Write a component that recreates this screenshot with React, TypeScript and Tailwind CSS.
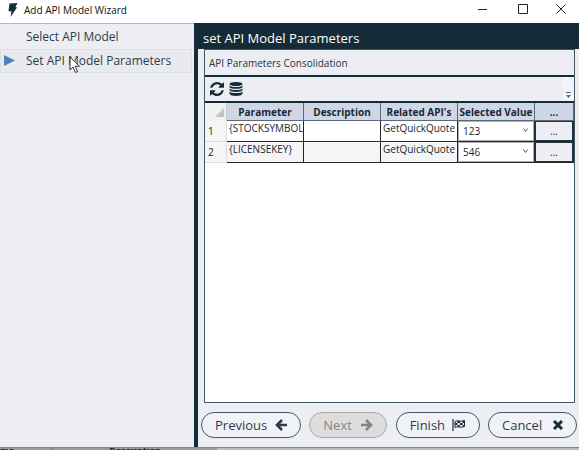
import React, { useState } from "react";

const steps = ["Select API Model", "Set API Model Parameters"];

const rows = [
  { id: 1, name: "{STOCKSYMBOL}", api: "GetQuickQuote", value: "123", shade: "bg-white" },
  { id: 2, name: "{LICENSEKEY}", api: "GetQuickQuote", value: "546", shade: "bg-[#f5f5f5]" },
];

function BoltIcon() {
  return (
    <svg width="10" height="14" viewBox="0 0 10 14" fill="#152b37" aria-hidden="true">
      <path d="M1.500 0.500 9.500 0 7.500 4 9 4.500 2.500 14 3.500 8.500 0.500 8z" />
    </svg>
  );
}

function RefreshIcon() {
  return (
    <svg width="14" height="14" viewBox="0 0 1536 1536" fill="#152b37" aria-hidden="true">
      <path d="M1511 928q0 5-1 7-64 268-268 434.500T764 1536q-146 0-282.500-55T238 1324l-129 129q-19 19-45 19t-45-19-19-45V960q0-26 19-45t45-19h448q26 0 45 19t19 45-19 45l-137 137q71 66 161 102t187 36q134 0 250-65t186-179q11-17 53-117 8-23 30-23h192q13 0 22.500 9.500t9.500 22.500zm25-800v448q0 26-19 45t-45 19h-448q-26 0-45-19t-19-45 19-45l138-138Q969 256 768 256q-134 0-250 65T332 500q-11 17-53 117-8 23-30 23H50q-13 0-22.500-9.500T18 608v-7q65-268 270-434.500T768 0q146 0 284 55.500T1297 212l130-129q19-19 45-19t45 19 19 45z" />
    </svg>
  );
}

function DatabaseIcon() {
  return (
    <svg width="14" height="14" viewBox="0 0 14 14" fill="#152b37" aria-hidden="true">
      <ellipse cx="7" cy="2" rx="6.500" ry="2" />
      <path d="M.5 3.400C2 5.400 12 5.400 13.500 3.400v1.800c-1.500 2.200-11.500 2.200-13 0z" />
      <path d="M.5 6.500c1.500 2 11.500 2 13 0v1.800c-1.500 2.200-11.500 2.200-13 0z" />
      <path d="M.5 9.600c1.500 2 11.500 2 13 0v2.200c-1.500 2.900-11.500 2.900-13 0z" />
    </svg>
  );
}

function ArrowIcon({ flip = false }: { flip?: boolean }) {
  return (
    <svg width="12" height="12" viewBox="0 0 12 12" fill="none" stroke="currentColor" strokeWidth="2.600" className={flip ? "rotate-180" : ""} aria-hidden="true">
      <path d="M7 1 2 6l5 5M2 6h10" />
    </svg>
  );
}

function FlagIcon() {
  return (
    <svg width="14" height="12" viewBox="0 0 14 12" fill="none" stroke="#152b37" aria-hidden="true">
      <path d="M1 0v12" strokeWidth="1.200" />
      <path d="M3 2.500c3-2 5 1 9.500-1v6c-4.500 2-6.500-1-9.500 1z" />
      <path d="M3 4h2.500v2H3zM8 4h2.500v2H8zM5.500 2h2.500v2H5.500zM5.500 6h2.500v1.500H5.500zM10.500 2h2v2h-2zM10.500 6h2v1.500h-2z" fill="#152b37" stroke="none" />
    </svg>
  );
}

function CloseIcon() {
  return (
    <svg width="10" height="10" viewBox="0 0 10 10" stroke="#152b37" strokeWidth="3" aria-hidden="true">
      <path d="M1 1 9 9M9 1 1 9" />
    </svg>
  );
}

function Pointer() {
  return (
    <svg className="pointer-events-none absolute left-[69px] top-[32px]" width="12" height="18" viewBox="0 0 12 18" aria-hidden="true">
      <path d="M1 1v13l3-3 2.500 5.500 2-1L6.200 10.200H10.500z" fill="#fff" stroke="#333" />
    </svg>
  );
}

function TitleBar() {
  return (
    <header className="flex h-[23px] shrink-0 items-start bg-white pl-2">
      <div className="flex h-[19px] flex-1 items-center gap-[6px]">
        <BoltIcon />
        <h1 className="text-[10px] leading-4 text-[#111]">Add API Model Wizard</h1>
      </div>
      <div className="flex h-[18px]">
        <button aria-label="Minimize" className="flex w-10 items-center justify-center">
          <svg width="10" height="10" stroke="#222"><path d="M0 5.500h9" /></svg>
        </button>
        <button aria-label="Maximize" className="flex w-10 items-center justify-center">
          <svg width="10" height="10" stroke="#222" fill="none"><path d="M.5.5h9v9h-9z" /></svg>
        </button>
        <button aria-label="Close" className="flex w-9 items-center justify-center">
          <svg width="10" height="10" stroke="#222"><path d="M.5.5l9 9M9.500.5l-9 9" /></svg>
        </button>
      </div>
    </header>
  );
}

function Sidebar() {
  return (
    <nav className="relative w-[194px] shrink-0 border-t border-[#b4b6ba] bg-[#edeef4] pr-[2px] pt-px">
      <ul>
        {steps.map((step, i) => (
          <li key={step}>
            <button
              aria-current={i === 1 ? "step" : undefined}
              className={
                "flex h-6 w-full items-center border text-left text-[12px] leading-4 text-[#2c3d49] " +
                (i === 1 ? "border-[#dfe0e3] bg-[#e9eaed]" : "border-transparent")
              }
            >
              <span className="w-[25px] pl-[3px]">
                {i === 1 && (
                  <svg width="11" height="12" fill="#4a83b8" aria-hidden="true"><path d="M0 0 11 5.500 0 11z" /></svg>
                )}
              </span>
              {step}
            </button>
          </li>
        ))}
      </ul>
      <Pointer />
    </nav>
  );
}

function ParameterTable() {
  const [values, setValues] = useState(rows.map((r) => r.value));
  const head = "h-[18px] border-r border-b border-[#5c6875] bg-[#cfd7e7] p-0 text-center font-bold";
  return (
    <table className="w-full table-fixed border-separate border-spacing-0 text-[10px] leading-[14px] text-[#1b2730]">
      <colgroup>
        <col className="w-[22px]" />
        <col />
        <col />
        <col />
        <col />
        <col className="w-[39px]" />
      </colgroup>
      <thead>
        <tr>
          <th className="border-r border-[#c4c9d0] bg-[#f1f1f1] p-0" aria-label="Row">
            <svg className="ml-auto mr-[2px]" width="9" height="9" fill="#c4c4c4" aria-hidden="true"><path d="M9 0v9H0z" /></svg>
          </th>
          <th className={head}>Parameter</th>
          <th className={head}>Description</th>
          <th className={head}>Related API's</th>
          <th className={head + " whitespace-nowrap"}>Selected Value</th>
          <th className={head}>...</th>
        </tr>
      </thead>
      <tbody>
        {rows.map((r, i) => {
          const cell = "h-[21px] overflow-hidden whitespace-nowrap border-r border-b border-[#262626] p-0 align-top " + r.shade;
          return (
            <tr key={r.id}>
              <th className="border-r border-b border-[#dddddd] bg-[#f5f5f5] p-0 pl-[3px] text-left align-middle font-normal">{r.id}</th>
              <td className={cell + " pl-[2px]"}>{r.name}</td>
              <td className={cell} />
              <td className={cell + " pl-[2px]"}>{r.api}</td>
              <td className={cell}>
                <div className="relative">
                  <select
                    aria-label={"Selected value for " + r.name}
                    value={values[i]}
                    onChange={(e) => setValues(values.map((v, k) => (k === i ? e.target.value : v)))}
                    className="block h-5 w-full appearance-none border border-[#adb0b5] bg-white pl-1 text-[10px] leading-4 text-[#1b2730]"
                  >
                    <option>123</option>
                    <option>546</option>
                  </select>
                  <svg className="pointer-events-none absolute right-[6px] top-[7px]" width="5" height="5" fill="none" stroke="#555" aria-hidden="true"><path d="M.5.5l2 3 2-3" /></svg>
                </div>
              </td>
              <td className={cell}>
                <button aria-label={"Edit " + r.name} className="flex h-5 w-full items-center justify-center border border-[#26323c] bg-[#edeef4] text-[10px] leading-3">
                  ...
                </button>
              </td>
            </tr>
          );
        })}
      </tbody>
    </table>
  );
}

const pill = "flex h-[26px] items-center justify-between rounded-full border px-[13px] text-[13px] leading-4 ";
const active = "border-[#425866] bg-[#f1f2f7] text-[#2c3d49]";

export default function App() {
  return (
    <div className="flex h-screen flex-col overflow-hidden bg-[#b9bbbc] font-['Open_Sans','Noto_Sans',sans-serif]">
      <TitleBar />
      <div className="flex min-h-0 flex-1">
        <Sidebar />
        <main className="flex min-w-0 flex-1 flex-col border-l-4 border-[#152b37] bg-[#edeef4]">
          <h2 className="flex h-[26px] shrink-0 items-center bg-[#152b37] pl-[5px] pt-1 text-[13px] leading-5 text-white">
            set API Model Parameters
          </h2>
          <section className="ml-[6px] mr-1 flex min-h-0 flex-1 flex-col border border-[#425866] bg-white">
            <h3 className="flex h-[27px] shrink-0 items-center border-b-2 border-[#152b37] bg-[#edeef4] pl-1 text-[10px] leading-4 text-[#26333d]">
              API Parameters Consolidation
            </h3>
            <div className="flex h-[26px] shrink-0 items-center border-b-2 border-[#152b37] bg-[#edeef4] pl-[5px]">
              <button aria-label="Refresh" className="mr-[5px]"><RefreshIcon /></button>
              <button aria-label="Data source"><DatabaseIcon /></button>
              <button aria-label="More" className="ml-auto flex h-full w-[11px] items-end justify-center bg-[#f0f5fb] pb-[3px]">
                <svg width="5" height="6" fill="#666"><path d="M0 0h5v1H0zM0 3h5L2.500 6z" /></svg>
              </button>
            </div>
            <ParameterTable />
          </section>
          <footer className="flex h-[44px] shrink-0 items-center justify-between pl-[3px] pr-[2px]">
            <button className={pill + "w-[100px] " + active}>Previous <ArrowIcon /></button>
            <button disabled className={pill + "w-[78px] border-[#a9a9a9] bg-[#dddddd] text-[#858585]"}>Next <ArrowIcon flip /></button>
            <button className={pill + "w-[84px] " + active}>Finish <FlagIcon /></button>
            <button className={pill + "w-[89px] " + active}>Cancel <CloseIcon /></button>
          </footer>
        </main>
      </div>
      <div className="flex h-[3px] shrink-0 overflow-hidden border-t border-[#85888b] text-[9px] font-bold leading-[6px] text-[#1b2730]">
        <span className="w-[52px] bg-[#959ba5]">me</span>
        <span className="w-[165px] border-l border-[#697078] bg-[#959ba5] text-center">Description</span>
      </div>
    </div>
  );
}
